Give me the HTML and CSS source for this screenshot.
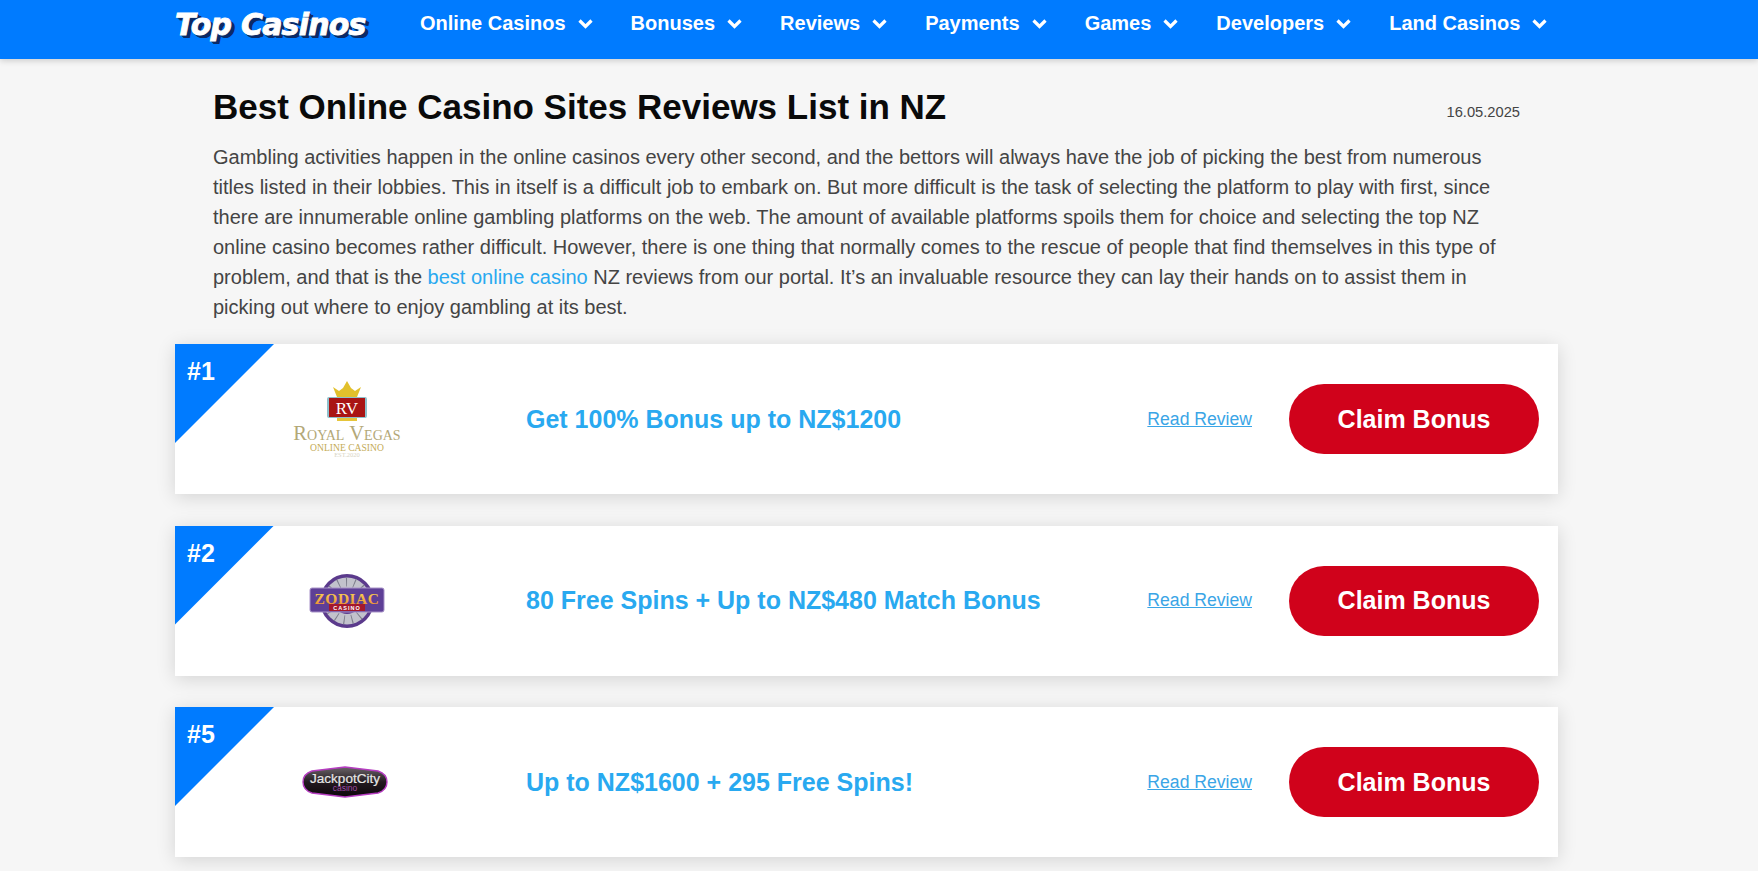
FILE: index.html
```html
<!DOCTYPE html>
<html lang="en">
<head>
<meta charset="utf-8">
<title>Top Casinos</title>
<link rel="stylesheet" href="styles.css">
</head>
<body>
<header class="site-header">
  <div class="header-inner">
    <a class="logo" href="#">Top Casinos</a>
    <nav class="nav">
      <a class="nav-item" href="#">Online Casinos <svg class="chev" viewBox="0 0 17 12"><path d="M2.5 2.5l6 6 6-6"/></svg></a>
      <a class="nav-item" href="#">Bonuses <svg class="chev" viewBox="0 0 17 12"><path d="M2.5 2.5l6 6 6-6"/></svg></a>
      <a class="nav-item" href="#">Reviews <svg class="chev" viewBox="0 0 17 12"><path d="M2.5 2.5l6 6 6-6"/></svg></a>
      <a class="nav-item" href="#">Payments <svg class="chev" viewBox="0 0 17 12"><path d="M2.5 2.5l6 6 6-6"/></svg></a>
      <a class="nav-item" href="#">Games <svg class="chev" viewBox="0 0 17 12"><path d="M2.5 2.5l6 6 6-6"/></svg></a>
      <a class="nav-item" href="#">Developers <svg class="chev" viewBox="0 0 17 12"><path d="M2.5 2.5l6 6 6-6"/></svg></a>
      <a class="nav-item" href="#">Land Casinos <svg class="chev" viewBox="0 0 17 12"><path d="M2.5 2.5l6 6 6-6"/></svg></a>
    </nav>
  </div>
</header>
<main class="main">
  <section class="intro">
    <div class="intro-head">
      <h1 class="title">Best Online Casino Sites Reviews List in NZ</h1>
      <span class="date">16.05.2025</span>
    </div>
    <p class="lead">Gambling activities happen in the online casinos every other second, and the bettors will always have the job of picking the best from numerous titles listed in their lobbies. This in itself is a difficult job to embark on. But more difficult is the task of selecting the platform to play with first, since there are innumerable online gambling platforms on the web. The amount of available platforms spoils them for choice and selecting the top NZ online casino becomes rather difficult. However, there is one thing that normally comes to the rescue of people that find themselves in this type of problem, and that is the <a class="lead-link" href="#">best online casino</a> NZ reviews from our portal. It’s an invaluable resource they can lay their hands on to assist them in picking out where to enjoy gambling at its best.</p>
  </section>
  <section class="cards">
    <article class="card">
      <div class="rank"><span class="rank-num">#1</span></div>
      <div class="card-logo">
        <svg class="logo-rv" viewBox="0 0 110 80" width="110" height="80">
          <path d="M45 18l-4-10 6 4 4-3 4-7 4 7 4 3 6-4-4 10z" fill="#e2c02c"/>
          <rect x="45" y="36" width="20" height="6" fill="#e6c53a"/>
          <rect x="35" y="18" width="40" height="21" rx="2" fill="#8fc0cc"/>
          <rect x="37" y="19" width="36" height="19" fill="#a91414"/>
          <text x="55" y="35" class="rv-mono">RV</text>
          <text x="55" y="61" class="rv-name">Royal Vegas</text>
          <text x="55" y="72" class="rv-sub">ONLINE CASINO</text>
          <text x="55" y="78" class="rv-est">EST.2020</text>
        </svg>
      </div>
      <a class="offer" href="#">Get 100% Bonus up to NZ$1200</a>
      <a class="review" href="#">Read Review</a>
      <a class="claim" href="#">Claim Bonus</a>
    </article>
    <article class="card">
      <div class="rank"><span class="rank-num">#2</span></div>
      <div class="card-logo">
        <svg class="logo-zodiac" viewBox="0 0 76 58" width="76" height="58">
          <defs>
            <linearGradient id="zg" x1="0" y1="0" x2="0" y2="1">
              <stop offset="0" stop-color="#f8e05a"/>
              <stop offset="1" stop-color="#ee8a30"/>
            </linearGradient>
          </defs>
          <circle cx="38" cy="29" r="27" fill="#5b3a8c"/>
          <circle cx="38" cy="29" r="23.5" fill="#c2c2cc"/>
          <circle cx="38" cy="29" r="19" fill="none" stroke="#7d7d8c" stroke-width="9" stroke-dasharray="1 7"/>
          <circle cx="38" cy="29" r="13" fill="#5b3a8c"/>
          <rect x="1" y="16" width="74" height="24" rx="2" fill="#5e3f96" stroke="#a893c8"/>
          <rect x="20" y="32" width="36" height="7" fill="#a5182c"/>
          <text x="38" y="31.5" class="z-name" fill="url(#zg)">ZODIAC</text>
          <text x="38" y="38" class="z-sub">CASINO</text>
        </svg>
      </div>
      <a class="offer" href="#">80 Free Spins + Up to NZ$480 Match Bonus</a>
      <a class="review" href="#">Read Review</a>
      <a class="claim" href="#">Claim Bonus</a>
    </article>
    <article class="card">
      <div class="rank"><span class="rank-num">#5</span></div>
      <div class="card-logo">
        <svg class="logo-jackpot" viewBox="0 0 90 34" width="90" height="34">
          <defs>
            <linearGradient id="jp" x1="0" y1="0" x2="0" y2="1">
              <stop offset="0" stop-color="#6a6468"/>
              <stop offset="0.5" stop-color="#231a20"/>
              <stop offset="1" stop-color="#0c060a"/>
            </linearGradient>
          </defs>
          <path d="M12 6L45 2l33 4q9 3 9 11t-9 11L45 32 12 28Q3 25 3 17T12 6z" fill="url(#jp)" stroke="#b53cc0" stroke-width="1.4"/>
          <text x="45" y="18" class="jp-name">JackpotCity</text>
          <text x="45" y="26" class="jp-sub">casino</text>
        </svg>
      </div>
      <a class="offer" href="#">Up to NZ$1600 + 295 Free Spins!</a>
      <a class="review" href="#">Read Review</a>
      <a class="claim" href="#">Claim Bonus</a>
    </article>
  </section>
</main>
</body>
</html>
```
FILE: styles.css
```css
* { box-sizing: border-box; }
html, body { margin: 0; padding: 0; }
body {
  background: #f6f6f6;
  font-family: "Liberation Sans", Arial, sans-serif;
  color: #444;
  height: 871px;
  overflow: hidden;
}
a { text-decoration: none; }

.site-header {
  height: 59px;
  background: #007bff;
  box-shadow: 0 2px 6px rgba(0, 0, 0, 0.16);
}
.header-inner {
  width: 1383px;
  margin-left: 175px;
  display: flex;
  align-items: flex-start;
}
.logo {
  width: 245px;
  font-family: "DejaVu Sans", sans-serif;
  font-weight: 700;
  font-style: italic;
  font-size: 30px;
  line-height: 50px;
  letter-spacing: -0.8px;
  white-space: nowrap;
  color: #fff;
  -webkit-text-stroke: 0.9px #fff;
  text-shadow: 1px 1px 0 #0b2a66, 2px 2px 0 #0b2a66, 3px 3px 0 #0b2a66, 4px 3px 0 #0b2a66;
}
.nav { display: flex; gap: 37px; }
.nav-item {
  display: flex;
  align-items: center;
  gap: 9px;
  height: 47px;
  color: #fff;
  font-size: 20px;
  font-weight: 700;
  white-space: nowrap;
}
.chev { width: 17px; height: 12px; margin-left: 2px; }
.chev path { fill: none; stroke: #fff; stroke-width: 3.2; }

.main { width: 1383px; margin-left: 175px; }
.intro { padding: 27px 38px 0; }
.intro-head {
  display: flex;
  justify-content: space-between;
  align-items: flex-end;
}
.title {
  margin: 0;
  font-size: 35px;
  line-height: 42px;
  font-weight: 700;
  color: #0a0a0a;
}
.date { font-size: 14.7px; color: #444; line-height: 16px; padding-bottom: 8px; }
.lead {
  margin: 14px 0 0;
  font-size: 20px;
  line-height: 30px;
  color: #444;
}
.lead-link { color: #29a9f0; }

.cards {
  margin-top: 22px;
  display: flex;
  flex-direction: column;
  gap: 31.5px;
}
.card {
  position: relative;
  height: 150px;
  background: #fff;
  box-shadow: 0 3px 18px rgba(0, 0, 0, 0.14);
  display: flex;
  align-items: center;
}
.rank {
  position: absolute;
  left: 0;
  top: 0;
  width: 99px;
  height: 99px;
  background: #007bff;
  clip-path: polygon(0 0, 100% 0, 0 100%);
}
.rank-num {
  position: absolute;
  left: 12px;
  top: 13px;
  color: #fff;
  font-size: 25px;
  font-weight: 700;
  line-height: 28px;
}
.card-logo {
  width: 351px;
  flex: none;
  display: flex;
  justify-content: center;
  padding-right: 7px;
}
.card-logo svg { display: block; }
.logo-jackpot { margin-left: -4px; }
.offer {
  flex: 1;
  color: #29a9f0;
  font-size: 25px;
  font-weight: 700;
  white-space: nowrap;
}
.review {
  color: #3aa5e6;
  font-size: 17.6px;
  text-decoration: underline;
  margin-right: 37px;
}
.claim {
  width: 250px;
  height: 70px;
  margin-right: 19px;
  border-radius: 35px;
  background: #d0021b;
  color: #fff;
  font-size: 25px;
  font-weight: 700;
  display: flex;
  align-items: center;
  justify-content: center;
}

.rv-mono { font-family: "Liberation Serif", serif; font-size: 17px; fill: #fff; text-anchor: middle; }
.rv-name { font-family: "Liberation Serif", serif; font-size: 20.6px; fill: #b3a877; text-anchor: middle; font-variant: small-caps; }
.rv-sub { font-family: "Liberation Serif", serif; font-size: 9.6px; fill: #c4ab57; text-anchor: middle; }
.rv-est { font-family: "Liberation Serif", serif; font-size: 6.5px; fill: #d8d4c4; text-anchor: middle; }
.z-name { font-family: "Liberation Serif", serif; font-weight: 700; font-size: 15.5px; text-anchor: middle; letter-spacing: 0.5px; }
.z-sub { font-family: "Liberation Sans", sans-serif; font-weight: 700; font-size: 5.5px; fill: #fff; text-anchor: middle; letter-spacing: 1px; }
.jp-name { font-family: "Liberation Sans", sans-serif; font-size: 13.5px; fill: #e6e6e6; stroke: #e6e6e6; stroke-width: 0.2px; text-anchor: middle; }
.jp-sub { font-family: "Liberation Sans", sans-serif; font-size: 8.5px; fill: #a04aa8; text-anchor: middle; }
```
